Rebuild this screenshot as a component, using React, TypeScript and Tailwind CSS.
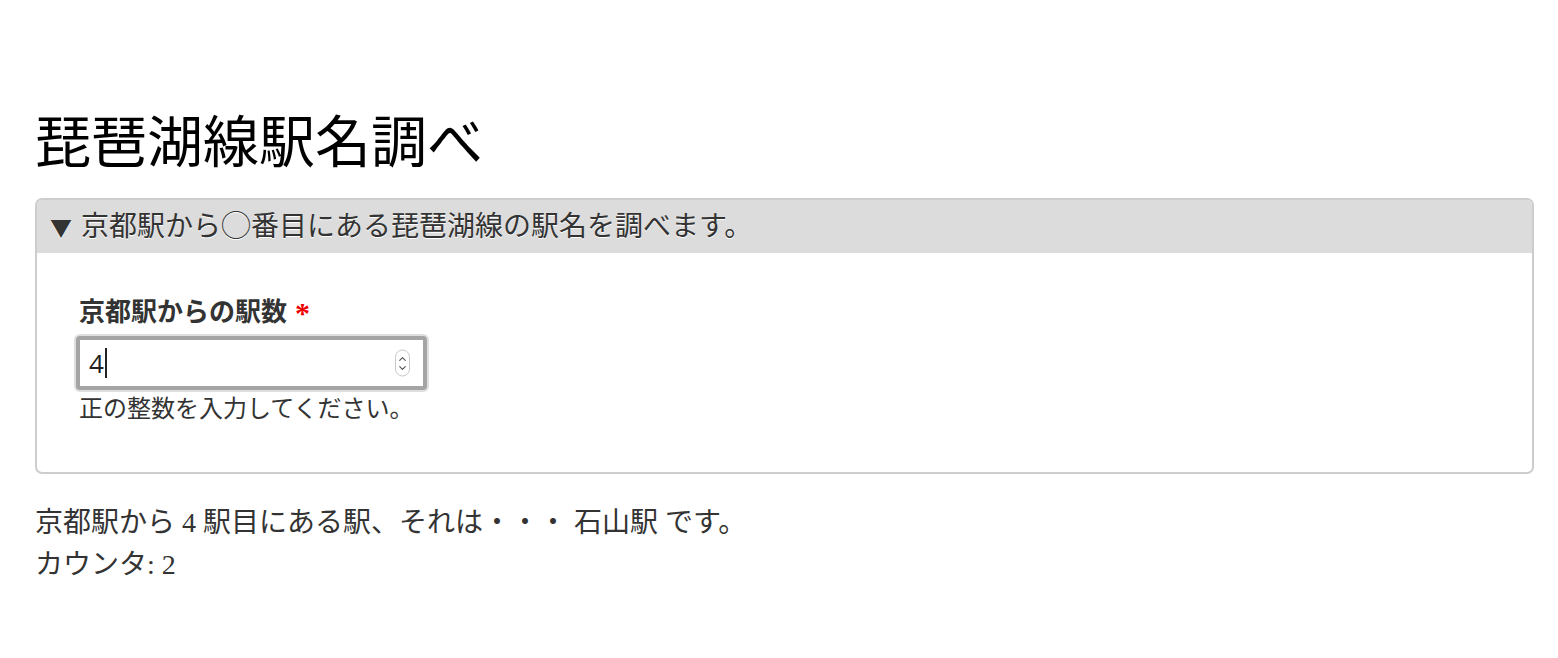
import { ChevronUp, ChevronDown } from "lucide-react";

const font = {
  fontFamily: '"Liberation Serif", "Noto Sans CJK JP", serif',
};

const cjk = { fontFamily: '"Noto Sans CJK JP", sans-serif' };

export default function App() {
  return (
    <div className="min-h-[658px] bg-white pl-[35px] pr-[24px] pt-[102px] text-[#333]" style={font}>
      {/* Page title */}
      <h1 className="text-[56px] leading-[82px] font-normal text-black">琵琶湖線駅名調べ</h1>

      {/* Details panel */}
      <div className="mt-[14px] rounded-[7px] border-2 border-[#cdcdcd] overflow-hidden">
        <div className="flex h-[53px] items-center gap-[9px] bg-[#dcdcdc] px-[13px] text-[28px] [text-shadow:0_1px_0_#fff]">
          <span className="text-[22px] text-[#333]" style={cjk}>▼</span>
          <span>
            京都駅から
            <span className="inline-block w-[30px] text-center text-[30px] leading-none" style={cjk}>◯</span>
            番目にある琵琶湖線の駅名を調べます。
          </span>
        </div>

        <div className="px-[42px] pt-[42px] pb-[47px]">
          <label className="flex items-center gap-[8px] text-[26px] font-bold leading-[36px]">
            京都駅からの駅数
            <span className="text-[#e00] text-[30px]">*</span>
          </label>

          <div className="relative -ml-[3px] mt-[5px] h-[54px] w-[351px] rounded-[4px] border-[4px] border-[#a4a4a4] bg-white shadow-[0_0_0_2px_#dedede]">
            <div className="flex h-full items-center pl-[9px] text-[26px] text-[#222]" style={{ fontFamily: '"Open Sans", "Liberation Sans", sans-serif' }}>
              4<span className="ml-[1px] inline-block h-[30px] w-[2px] bg-[#222]" />
            </div>
            <div className="absolute right-[13px] top-1/2 flex h-[27px] w-[15px] -translate-y-1/2 flex-col items-center justify-center rounded-full border border-[#c8c8c8] text-[#555]">
              <ChevronUp size={11} strokeWidth={2.5} />
              <ChevronDown size={11} strokeWidth={2.5} className="-mt-[2px]" />
            </div>
          </div>

          <p className="mt-[3px] text-[24px] leading-[32px]">正の整数を入力してください。</p>
        </div>
      </div>

      {/* Result */}
      <div className="mt-[28px] text-[28px] leading-[42px]">
        <p>京都駅から 4 駅目にある駅、それは・・・ 石山駅 です。</p>
        <p>カウンタ: 2</p>
      </div>
    </div>
  );
}
